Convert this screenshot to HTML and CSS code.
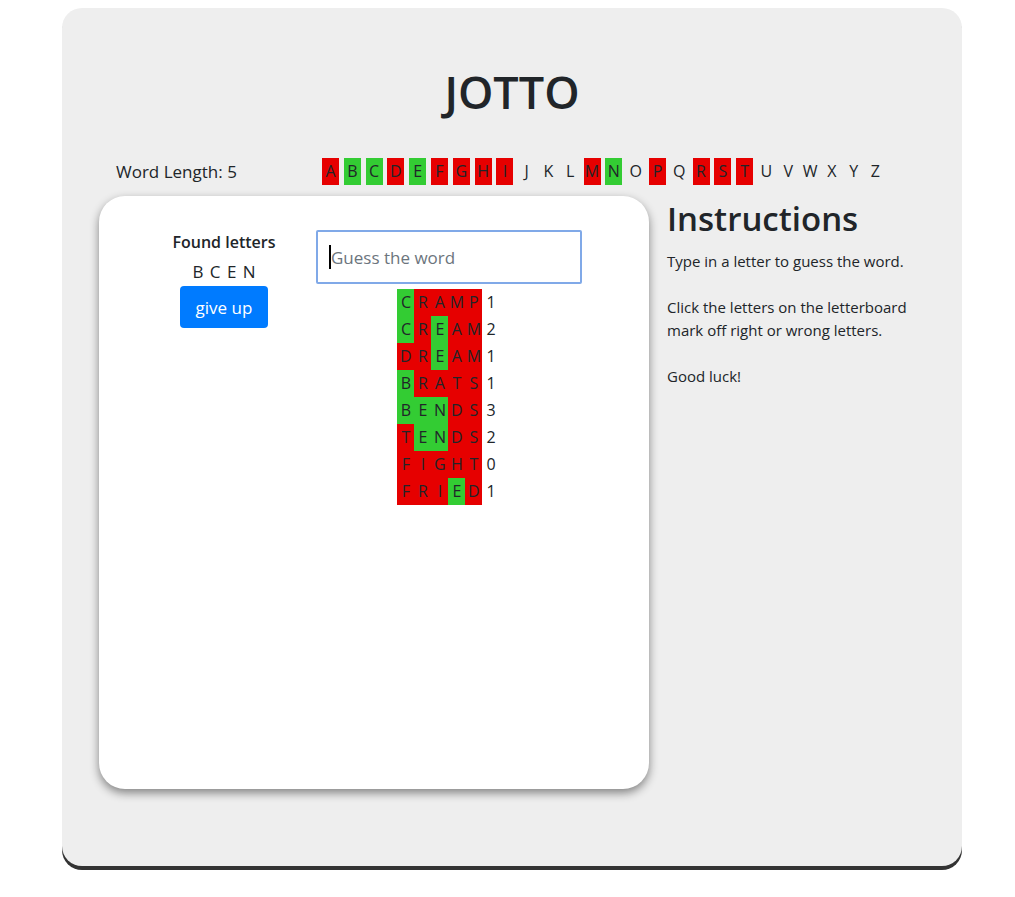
FILE: index.html
```html
<!DOCTYPE html>
<html>
<head>
<meta charset="utf-8">
<link rel="stylesheet" href="styles.css">
</head>
<body>
<div class="panel">
  <h1 class="title">JOTTO</h1>
  <div class="board-row">
    <div class="word-length">Word Length: 5</div>
    <div class="letters">
      <span class="l red">A</span><span class="l green">B</span><span class="l green">C</span><span class="l red">D</span><span class="l green">E</span><span class="l red">F</span><span class="l red">G</span><span class="l red">H</span><span class="l red">I</span><span class="l">J</span><span class="l">K</span><span class="l">L</span><span class="l red">M</span><span class="l green">N</span><span class="l">O</span><span class="l red">P</span><span class="l">Q</span><span class="l red">R</span><span class="l red">S</span><span class="l red">T</span><span class="l">U</span><span class="l">V</span><span class="l">W</span><span class="l">X</span><span class="l">Y</span><span class="l">Z</span>
    </div>
  </div>
  <div class="main">
    <div class="card">
      <div class="found">
        <div class="found-title">Found letters</div>
        <div class="found-letters">B C E N</div>
        <button class="btn">give up</button>
      </div>
      <div class="guess">
        <div class="input-wrap"><input class="guess-input" type="text" placeholder="Guess the word"><span class="caret"></span></div>
        <div class="grid">
          <div class="row"><span class="c green">C</span><span class="c red">R</span><span class="c red">A</span><span class="c red">M</span><span class="c red">P</span><span class="n">1</span></div>
          <div class="row"><span class="c green">C</span><span class="c red">R</span><span class="c green">E</span><span class="c red">A</span><span class="c red">M</span><span class="n">2</span></div>
          <div class="row"><span class="c red">D</span><span class="c red">R</span><span class="c green">E</span><span class="c red">A</span><span class="c red">M</span><span class="n">1</span></div>
          <div class="row"><span class="c green">B</span><span class="c red">R</span><span class="c red">A</span><span class="c red">T</span><span class="c red">S</span><span class="n">1</span></div>
          <div class="row"><span class="c green">B</span><span class="c green">E</span><span class="c green">N</span><span class="c red">D</span><span class="c red">S</span><span class="n">3</span></div>
          <div class="row"><span class="c red">T</span><span class="c green">E</span><span class="c green">N</span><span class="c red">D</span><span class="c red">S</span><span class="n">2</span></div>
          <div class="row"><span class="c red">F</span><span class="c red">I</span><span class="c red">G</span><span class="c red">H</span><span class="c red">T</span><span class="n">0</span></div>
          <div class="row"><span class="c red">F</span><span class="c red">R</span><span class="c red">I</span><span class="c green">E</span><span class="c red">D</span><span class="n">1</span></div>
        </div>
      </div>
    </div>
    <div class="instructions">
      <h2 class="inst-title">Instructions</h2>
      <p class="inst-text">Type in a letter to guess the word.</p>
      <p class="inst-text">Click the letters on the letterboard<br>mark off right or wrong letters.</p>
      <p class="inst-text">Good luck!</p>
    </div>
  </div>
</div>
</body>
</html>
```

FILE: styles.css
```css
html, body {
  min-height: 100%;
}

body {
  margin: 8px 0 0 62px;
  padding-bottom: 23px;
  font-family: "Open Sans", "Noto Sans", sans-serif;
  color: #212529;
  background: #fff;
}

.panel {
  width: 900px;
  height: 858px;
  box-sizing: border-box;
  background: #eeeeee;
  border-radius: 20px;
  box-shadow: 0 4px 0 0 #333333;
  padding: 56px 0 0 37px;
}

.title {
  margin: 0;
  height: 55px;
  line-height: 55px;
  font-size: 45px;
  font-weight: 600;
  text-align: center;
  padding-right: 37px;
}

.board-row {
  display: flex;
  margin-top: 39px;
  padding-left: 17px;
  height: 27px;
  align-items: center;
  font-size: 16px;
}

.word-length {
  width: 206px;
  font-size: 17px;
}

.letters {
  display: flex;
}

.l {
  display: inline-block;
  width: 17px;
  height: 27px;
  line-height: 27px;
  text-align: center;
  margin-right: 4.8px;
}

.red { background: #e60000; }
.green { background: #33cc33; }

.main {
  display: flex;
  margin-top: 11px;
}

.card {
  width: 550px;
  height: 593px;
  box-sizing: border-box;
  background: #fff;
  border-radius: 26px;
  box-shadow: 0 4px 10px rgba(0, 0, 0, 0.45);
  padding: 34px 0 0 50px;
  display: flex;
  gap: 17px;
}

.found {
  width: 150px;
  display: flex;
  flex-direction: column;
  align-items: center;
  font-size: 16px;
}

.found-title {
  font-weight: 600;
  line-height: 24px;
}

.found-letters {
  margin-top: 6px;
  line-height: 24px;
  font-size: 17px;
  word-spacing: 2px;
}

.btn {
  margin-top: 2px;
  background: #007bff;
  color: #fff;
  border: none;
  border-radius: 4px;
  font-family: inherit;
  font-size: 17px;
  width: 88px;
  height: 42px;
  padding: 0;
}

.guess {
  width: 266px;
  display: flex;
  flex-direction: column;
  align-items: center;
}

.input-wrap {
  position: relative;
  width: 266px;
  height: 54px;
}

.guess-input {
  width: 100%;
  height: 100%;
  box-sizing: border-box;
  border: 2px solid #80a9e8;
  border-radius: 2px;
  padding: 0 0 0 13px;
  font-family: inherit;
  font-size: 17px;
  color: #495057;
  outline: none;
  background: #fff;
}

.guess-input::placeholder {
  color: #6c757d;
}

.caret {
  position: absolute;
  left: 13px;
  top: 15px;
  width: 2px;
  height: 24px;
  background: #000;
}

.grid {
  margin-top: 5px;
  display: flex;
  flex-direction: column;
  padding-right: 5px;
}

.row {
  display: flex;
  height: 27px;
  line-height: 27px;
  font-size: 16px;
}

.c {
  width: 17px;
  text-align: center;
}

.n {
  margin-left: 4px;
}

.instructions {
  margin-left: 18px;
  width: 250px;
}

.inst-title {
  margin: 0 0 8px;
  font-size: 33px;
  font-weight: 600;
  line-height: 46px;
}

.inst-text {
  margin: 0 0 23px;
  font-size: 15px;
  line-height: 23px;
}
```
